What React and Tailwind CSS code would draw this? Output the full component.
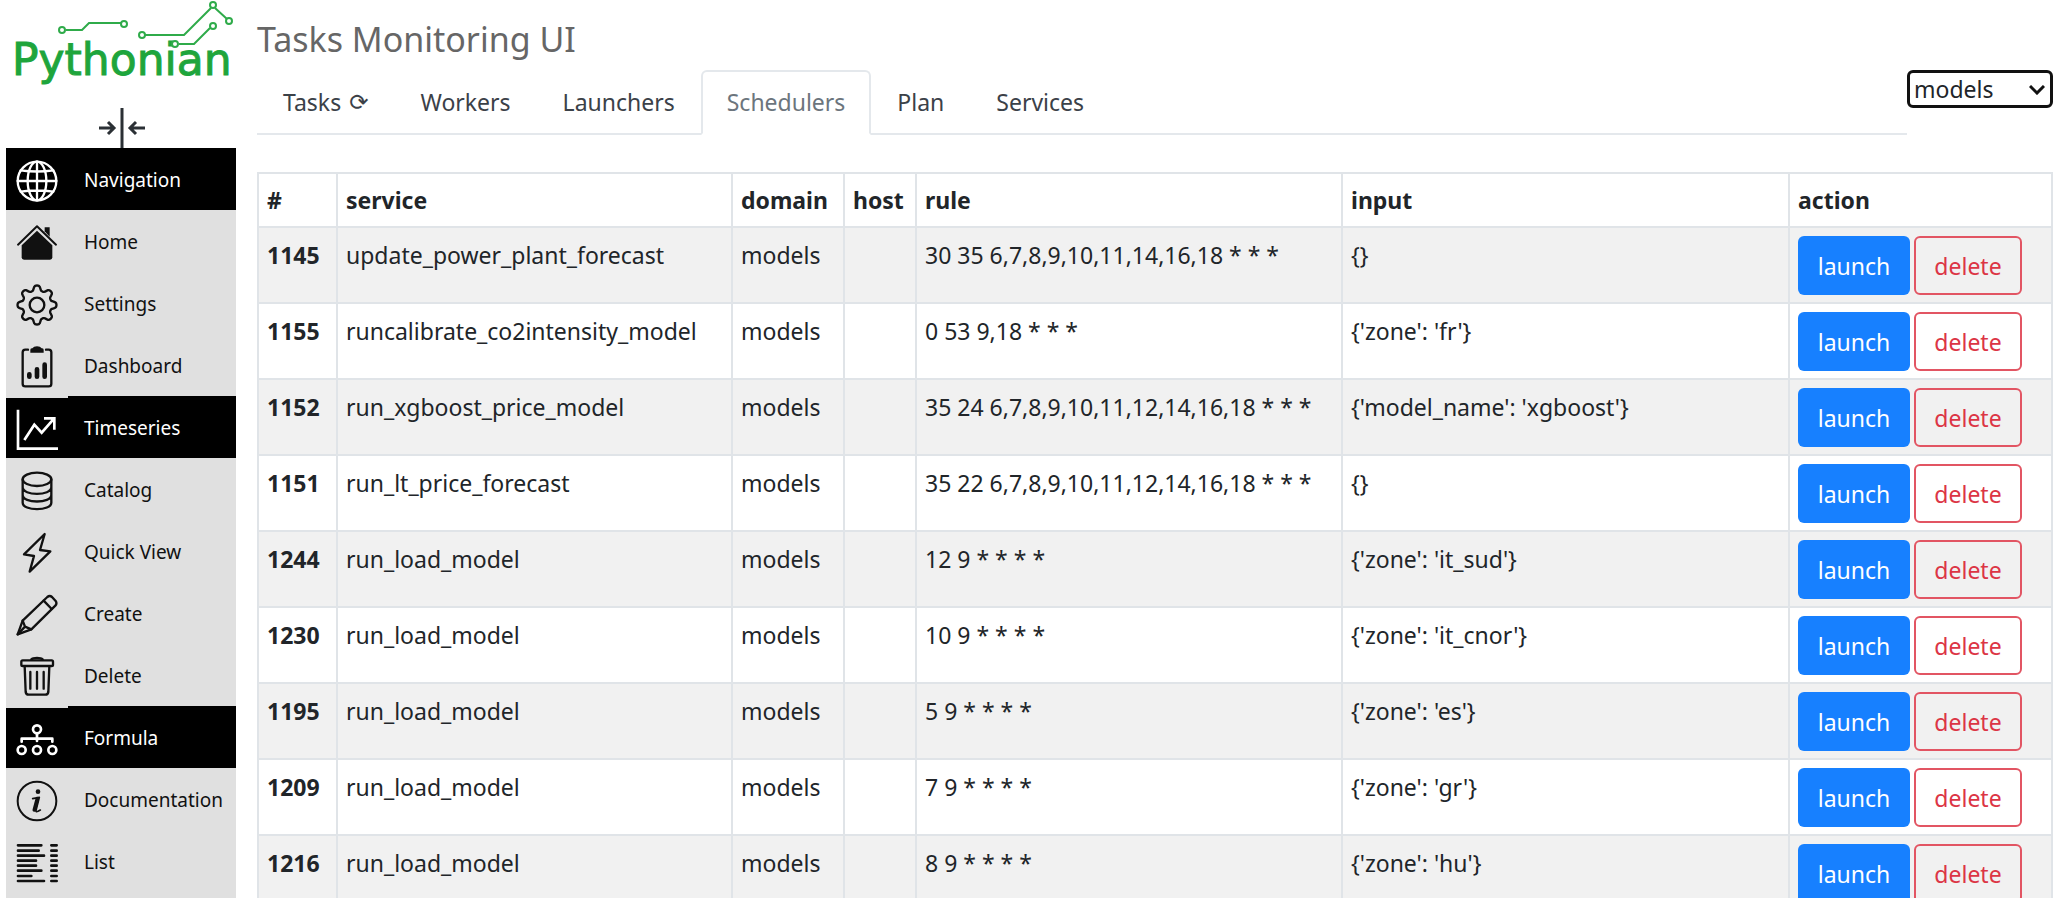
import React from "react"
import clsx from "clsx"

// wavy outline of the settings gear: eight teeth around the centre
const GEAR = Array.from({ length: 128 }, (_, i) => {
  const a = (i / 128) * Math.PI * 2,
    r = 51 + 8 * Math.tanh(1.6 * Math.cos(8 * a));
  return `${ (63 + r * Math.cos(a)).toFixed(1) },${ (63 + r * Math.sin(a)).toFixed(1) }`;
}).join(" ");

const ICONS = {
  globe: (
    <g strokeWidth="7">
      <circle cx="63" cy="63" r="58"/>
      <ellipse cx="63" cy="63" rx="28" ry="58"/>
      <path d="M63 5V121M5 63H121M14 31Q63 38 112 31M14 95Q63 88 112 95"/>
    </g>
  ),
  home: (
    <g strokeWidth="6">
      <path d="M6 68L63 13L120 68"/>
      <path d="M63 26L109 70V106Q109 113 102 113H24Q17 113 17 106V70Z" fill="currentColor" stroke="none"/>
      <path d="M86 28V16H101V44Z" fill="currentColor" stroke="none"/>
    </g>
  ),
  settings: (
    <g strokeWidth="7">
      <polygon points={ GEAR }/>
      <circle cx="63" cy="63" r="22"/>
    </g>
  ),
  dashboard: (
    <g strokeWidth="7">
      <path d="M36 11H28Q20 11 20 19V113Q20 121 28 121H98Q106 121 106 113V19Q106 11 98 11H90"/>
      <path d="M43 20V11Q43 7 49 7Q53 1 63 1Q73 1 77 7Q83 7 83 11V20Z" fill="currentColor" stroke="none"/>
      <path strokeWidth="14" d="M40 85V92M63 70V92M86 56V92"/>
    </g>
  ),
  timeseries: (
    <g strokeWidth="8" strokeLinejoin="miter" strokeLinecap="butt">
      <path d="M6 2V119H126"/>
      <path d="M25 93L55 47L77 71L112 31M84 28H115V62"/>
    </g>
  ),
  catalog: (
    <g strokeWidth="7">
      <ellipse cx="63" cy="28" rx="43" ry="20"/>
      <path d="M20 28V98C20 124 106 124 106 98V28M20 52C20 78 106 78 106 52M20 75C20 101 106 101 106 75"/>
    </g>
  ),
  quick: (
    <path strokeWidth="7" d="M86 6L24 67L54 72L41 119L103 58L72 54Z"/>
  ),
  create: (
    <g strokeWidth="7">
      <path d="M5 121L20 80L94 9Q101 3 108 9L119 21Q124 28 118 35L46 106Z"/>
      <path d="M83 20L107 45M20 80L27 98L46 106M27 98L5 121"/>
    </g>
  ),
  trash: (
    <g strokeWidth="7">
      <rect x="16" y="13" width="95" height="17" rx="4"/>
      <path d="M46 10Q50 6 63 6Q76 6 80 10"/>
      <path d="M26 31L29 108Q30 116 38 116H88Q96 116 97 108L100 31M43 48V98M63 48V98M83 48V98"/>
    </g>
  ),
  formula: (
    <g strokeWidth="8">
      <circle cx="63" cy="31" r="12"/>
      <circle cx="17" cy="93" r="12"/>
      <circle cx="63" cy="93" r="12"/>
      <circle cx="109" cy="93" r="12"/>
      <path d="M63 44V66M17 68V59H109V68"/>
    </g>
  ),
  info: (
    <g strokeWidth="6">
      <circle cx="63" cy="63" r="58"/>
      <circle cx="66" cy="35" r="7" fill="currentColor" stroke="none"/>
      <path d="M50 56L70 52L60 92Q59 97 66 94L73 90" strokeWidth="5"/>
      <path d="M64 56L55 90" strokeWidth="11"/>
    </g>
  ),
  list: (
    <g strokeWidth="8">
      <path d="M6 10H76M6 26H68M6 41H84M6 56H60M6 71H60M6 86H76M6 102H46M6 117H84"/>
      <path d="M106 10H122M106 26H122M106 41H122M106 56H122M106 71H122M106 86H122M106 102H122M106 117H122"/>
    </g>
  )
}

const MENU = [
  { label: "Navigation", icon: "globe", section: true },
  { label: "Home", icon: "home" },
  { label: "Settings", icon: "settings" },
  { label: "Dashboard", icon: "dashboard" },
  { label: "Timeseries", icon: "timeseries", section: true },
  { label: "Catalog", icon: "catalog" },
  { label: "Quick View", icon: "quick" },
  { label: "Create", icon: "create" },
  { label: "Delete", icon: "trash" },
  { label: "Formula", icon: "formula", section: true },
  { label: "Documentation", icon: "info" },
  { label: "List", icon: "list" }
]

const TABS = ["Tasks", "Workers", "Launchers", "Schedulers", "Plan", "Services"]

const ROWS = [
  [1145, "update_power_plant_forecast", "30 35 6,7,8,9,10,11,14,16,18 * * *", "{}"],
  [1155, "runcalibrate_co2intensity_model", "0 53 9,18 * * *", "{'zone': 'fr'}"],
  [1152, "run_xgboost_price_model", "35 24 6,7,8,9,10,11,12,14,16,18 * * *", "{'model_name': 'xgboost'}"],
  [1151, "run_lt_price_forecast", "35 22 6,7,8,9,10,11,12,14,16,18 * * *", "{}"],
  [1244, "run_load_model", "12 9 * * * *", "{'zone': 'it_sud'}"],
  [1230, "run_load_model", "10 9 * * * *", "{'zone': 'it_cnor'}"],
  [1195, "run_load_model", "5 9 * * * *", "{'zone': 'es'}"],
  [1209, "run_load_model", "7 9 * * * *", "{'zone': 'gr'}"],
  [1216, "run_load_model", "8 9 * * * *", "{'zone': 'hu'}"]
]

const Icon = ({ name }) => (
  <svg viewBox="0 0 126 126" className="h-[42px] w-[42px]" fill="none" stroke="currentColor"
    strokeLinejoin="round" strokeLinecap="round" aria-hidden="true">
    { ICONS[name] }
  </svg>
)

const Logo = () => (
  <svg viewBox="0 0 236 108" className="h-[108px] w-[236px]" role="img" aria-label="Pythonian">
    <text x="12" y="75" fontSize="44" fill="#1ea53c" stroke="#1ea53c" strokeWidth="1"
      className="font-['DejaVu_Sans',sans-serif]">Pythonian</text>
    <g fill="none" stroke="#2fab4a" strokeWidth="2">
      <path d="M66 30H82L89 23H121M145 35H184L211 8M215 8L227 19M179 44H194L210 28"/>
      <g fill="#fff">
        <circle cx="62" cy="30" r="3"/>
        <circle cx="124" cy="24" r="3"/>
        <circle cx="142" cy="35" r="3"/>
        <circle cx="213" cy="5" r="3"/>
        <circle cx="229" cy="21" r="3"/>
        <circle cx="213" cy="26" r="3"/>
        <circle cx="175" cy="44" r="3"/>
      </g>
    </g>
  </svg>
)

const Sidebar = () => (
  <aside className="flex w-[236px] shrink-0 flex-col">
    <Logo/>
    <button type="button" aria-label="Collapse menu" className="flex h-10 justify-center pl-2">
      <svg viewBox="0 0 48 40" className="h-10 w-12" fill="none" stroke="#2b3035" strokeWidth="3">
        <path d="M24 0V40M1 20H16M10 14L16 20L10 26M47 20H32M38 14L32 20L38 26"/>
      </svg>
    </button>
    <nav className="ml-1.5 flex-1 bg-[#e0e0e0]">
      { MENU.map(({ label, icon, section }, i) =>
          <a href="#" key={ label } className={ clsx(
            "flex h-[62px] items-stretch text-[19px]",
            section ? "bg-black text-white" : "text-[#111]"
          ) }>
            <span className={ clsx(
              "flex w-[62px] items-center justify-center pt-1",
              section && i > 0 && "border-t-2 border-[#e0e0e0]"
            ) }>
              <Icon name={ icon }/>
            </span>
            <span className="flex items-center pt-0.5 pl-4">{ label }</span>
          </a>
        )
      }
    </nav>
  </aside>
)

const Tabs = ({ active, onSelect }) => (
  <div role="tablist" className="flex flex-1 border-b-2 border-[#e4e8ec]">
    { TABS.map(tab =>
        <button type="button" role="tab" key={ tab }
          aria-selected={ tab === active }
          onClick={ () => onSelect(tab) }
          className={ clsx(
            "-mb-0.5 flex h-[65px] items-center gap-2 rounded-t-md border-2 px-6",
            tab === active
              ? "border-[#e4e8ec] border-b-white bg-white text-[#6c757d]"
              : "border-transparent text-[#3b4148]"
          ) }>
          { tab }
          { tab === "Tasks" && <span className="font-['DejaVu_Sans',sans-serif]">⟳</span> }
        </button>
      )
    }
  </div>
)

const DomainSelect = () => (
  <div className="relative">
    <select aria-label="Domain" defaultValue="models"
      className="h-[38px] w-[146px] appearance-none rounded-md border-3 border-[#111] bg-white pl-1 leading-8 text-[#212529]">
      <option>models</option>
    </select>
    <svg viewBox="0 0 16 10" className="pointer-events-none absolute top-[15px] right-2 h-2.5 w-4"
      fill="none" stroke="#111" strokeWidth="3" aria-hidden="true">
      <path d="M1 1L8 8L15 1"/>
    </svg>
  </div>
)

const cell = "border-2 border-[#e0e4e8] px-2 text-left align-top"

const SchedulerTable = () => (
  <table className="mt-[37px] w-full table-fixed border-collapse leading-9 text-[#212529]">
    <colgroup>
      <col className="w-[79px]"/>
      <col className="w-[395px]"/>
      <col className="w-28"/>
      <col className="w-18"/>
      <col className="w-[426px]"/>
      <col/>
      <col className="w-[263px]"/>
    </colgroup>
    <thead>
      <tr>
        { ["#", "service", "domain", "host", "rule", "input", "action"].map(name =>
            <th key={ name } className={ clsx(cell, "py-2 font-bold") }>{ name }</th>
          )
        }
      </tr>
    </thead>
    <tbody>
      { ROWS.map(([id, service, rule, input]) =>
          <tr key={ id } className="odd:bg-[#f1f1f1]">
            <th scope="row" className={ clsx(cell, "pt-[9px] font-bold") }>{ id }</th>
            <td className={ clsx(cell, "pt-[9px]") }>{ service }</td>
            <td className={ clsx(cell, "pt-[9px]") }>models</td>
            <td className={ cell }></td>
            <td className={ clsx(cell, "pt-[9px]") }>{ rule }</td>
            <td className={ clsx(cell, "pt-[9px]") }>{ input }</td>
            <td className={ clsx(cell, "pt-2 pb-[7px]") }>
              <div className="flex gap-1">
                <button type="button" className="h-[59px] w-28 rounded-md bg-[#1780ff] text-white">launch</button>
                <button type="button" className="h-[59px] w-27 rounded-md border-2 border-[#e25563] text-[#dc3545]">delete</button>
              </div>
            </td>
          </tr>
        )
      }
    </tbody>
  </table>
)

export default function App() {
  const [tab, setTab] = React.useState("Schedulers");

  return (
    <div className="flex h-screen overflow-hidden bg-white font-['Noto_Sans',sans-serif] text-[23px]">
      <Sidebar/>
      <main className="min-w-0 flex-1 pt-[19px] pr-[11px] pl-[21px]">
        <h1 className="text-[34px] leading-10 text-[#666]">Tasks Monitoring UI</h1>
        <div className="mt-[11px] flex items-start">
          <Tabs active={ tab } onSelect={ setTab }/>
          <DomainSelect/>
        </div>
        <SchedulerTable/>
      </main>
    </div>
  )
}
